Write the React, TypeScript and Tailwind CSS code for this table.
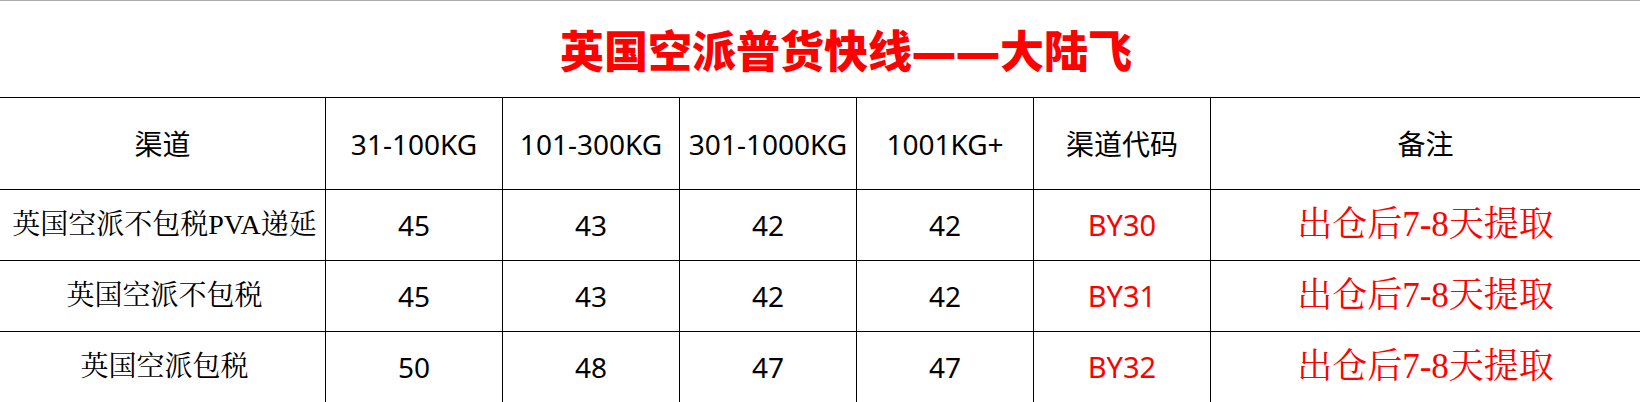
import React from "react";

const sans = "font-['Noto_Sans','Noto_Sans_CJK_SC',sans-serif]";
const serif = "font-['Liberation_Serif','Noto_Serif_CJK_SC','Noto_Sans_CJK_SC',serif]";

type Row = { name: string; p: string[]; code: string; note: string };

const rows: Row[] = [
  { name: "英国空派不包税PVA递延", p: ["45", "43", "42", "42"], code: "BY30", note: "出仓后7-8天提取" },
  { name: "英国空派不包税", p: ["45", "43", "42", "42"], code: "BY31", note: "出仓后7-8天提取" },
  { name: "英国空派包税", p: ["50", "48", "47", "47"], code: "BY32", note: "出仓后7-8天提取" },
];

const headers = ["31-100KG", "101-300KG", "301-1000KG", "1001KG+"];

export default function App() {
  return (
    <div className="w-[1640px] h-[402px] overflow-hidden bg-white border-t border-[#ababab]">
      <div className="h-[96px] flex items-center justify-center pl-[52px]">
        <div className={`${sans} text-[44px] font-black text-[#ff0000] leading-none pt-[4px]`}>
          英国空派普货快线——大陆飞
        </div>
      </div>
      <div className={`flex h-[92px] border-t border-black text-[28px] text-black ${sans}`}>
        <div className="w-[325px] flex items-center justify-center">渠道</div>
        {headers.map((h) => (
          <div key={h} className="w-[177px] border-l border-black flex items-center justify-center">
            {h}
          </div>
        ))}
        <div className="w-[177px] border-l border-black flex items-center justify-center">渠道代码</div>
        <div className="flex-1 border-l border-black flex items-center justify-center">备注</div>
      </div>
      {rows.map((r) => (
        <div key={r.code} className="flex h-[71px] border-t border-black text-[28px]">
          <div className={`w-[325px] flex items-center justify-center pl-[4px] text-black ${serif}`}>{r.name}</div>
          {r.p.map((v, i) => (
            <div key={i} className={`w-[177px] border-l border-black flex items-center justify-center text-black ${sans}`}>
              {v}
            </div>
          ))}
          <div className={`w-[177px] border-l border-black flex items-center justify-center text-[#ff0000] text-[29px] ${sans}`}>
            {r.code}
          </div>
          <div className={`flex-1 border-l border-black flex items-center justify-center text-[#ff0000] text-[35px] ${serif}`}>
            {r.note}
          </div>
        </div>
      ))}
    </div>
  );
}
